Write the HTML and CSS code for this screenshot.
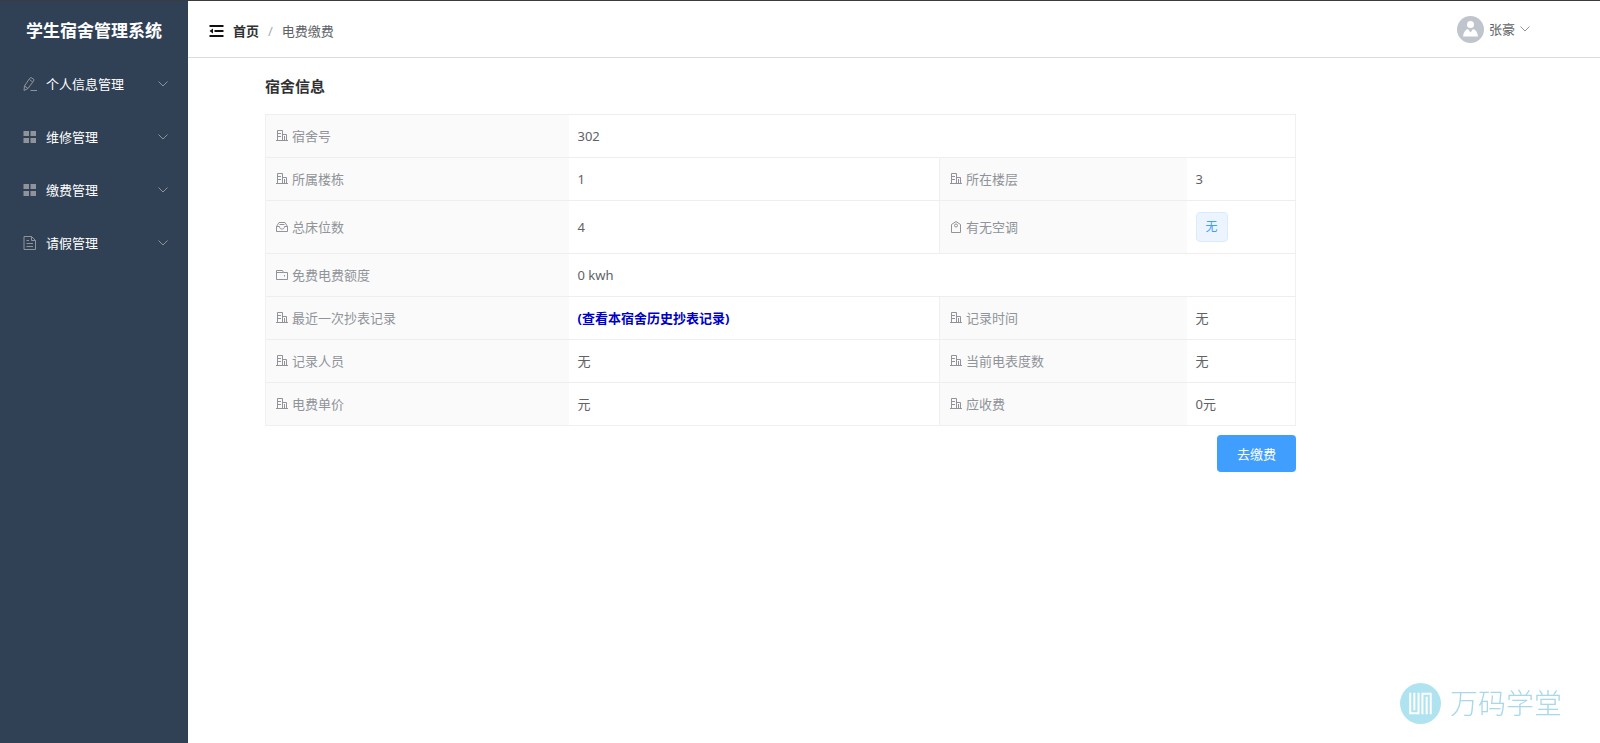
FILE: index.html
```html
<!DOCTYPE html>
<html lang="zh-CN">
<head>
<meta charset="utf-8">
<title>学生宿舍管理系统</title>
<link rel="stylesheet" href="styles.css">
</head>
<body>
<svg class="sprite" aria-hidden="true">
  <symbol id="office" viewBox="0 0 12 12"><path d="M1.5 10.500V.5H6.500V10.500M6.500 4.500H10.500V10.500M0 10.500H12M1.500 3.500H5M1.500 6.500H5M8.500 6V10.500" /></symbol>
  <symbol id="box" viewBox="0 0 12 12"><path d="M.5 5.500 3 1.500H9L11.500 5.500V10.500H.5ZM.5 5.500H3.500C3.500 9 8.500 9 8.500 5.500H11.500M3.500 3.500H8.500" /></symbol>
  <symbol id="wallet" viewBox="0 0 12 12"><path d="M.5 10.500V1.500H6.500L7.500 3.500H11.500V10.500ZM.5 3.500H7.500M8.500 6V7.500" /></symbol>
  <symbol id="tag" viewBox="0 0 12 12"><path d="M1.500 11.500V3.500L6 .5 10.500 3.500V11.500ZM7.500 4.500A1.500 1.500 0 1 1 4.500 4.500 1.500 1.500 0 1 1 7.500 4.500" /></symbol>
  <symbol id="chevron" viewBox="0 0 10 6"><path d="M.5 .5 5 5 9.500 .5" /></symbol>
  <symbol id="grid" viewBox="0 0 14 14"><path class="solid" d="M.5 1H6V6H.5ZM7.500 1H13V6H7.500ZM.5 8H6V13H.5ZM7.500 8H13V13H7.500Z" /></symbol>
  <symbol id="edit" viewBox="0 0 14 14"><path d="M6.500 1.500 8 .5 11 2.500 10.500 4 5 11.500 1 13.500 1.500 9ZM6.500 2.500 9.500 5M1.500 9 5 11.500M7.500 13.500H14" /></symbol>
  <symbol id="doc" viewBox="0 0 14 14"><path d="M1 .5H8.500L12.500 4.500V13.500H1ZM8.500 .5V4.500H12.500M3.500 4.500H6M3.500 7.500H10M3.500 10.500H10" /></symbol>
</svg>

<div class="app">
  <aside class="sidebar">
    <h1 class="brand">学生宿舍管理系统</h1>
    <nav class="menu">
      <button class="menu-item" type="button"><svg class="menu-icon"><use href="#edit"/></svg><span class="menu-text">个人信息管理</span><svg class="chevron"><use href="#chevron"/></svg></button>
      <button class="menu-item" type="button"><svg class="menu-icon"><use href="#grid"/></svg><span class="menu-text">维修管理</span><svg class="chevron"><use href="#chevron"/></svg></button>
      <button class="menu-item" type="button"><svg class="menu-icon"><use href="#grid"/></svg><span class="menu-text">缴费管理</span><svg class="chevron"><use href="#chevron"/></svg></button>
      <button class="menu-item" type="button"><svg class="menu-icon"><use href="#doc"/></svg><span class="menu-text">请假管理</span><svg class="chevron"><use href="#chevron"/></svg></button>
    </nav>
  </aside>

  <div class="page">
    <header class="topbar">
      <div class="crumbs">
        <button class="fold" type="button" aria-label="收起菜单"><svg class="fold-icon" viewBox="0 0 14 12"><path d="M0 0H14V2H0ZM5 5H14V7H5ZM0 10H14V12H0ZM3.500 3.500V8.500L0 6Z" /></svg></button>
        <a class="crumb-home" href="#">首页</a>
        <span class="crumb-sep">/</span>
        <span>电费缴费</span>
      </div>
      <button class="user" type="button">
        <svg class="avatar" viewBox="0 0 27 27"><circle class="avatar-bg" cx="13.500" cy="13.500" r="13.500"/><circle cx="13.500" cy="8.500" r="3.500"/><path d="M6 20.500C6.500 16 8.500 13.500 11 13L13.500 16.500 16 13C18.500 13.500 20.500 16 21 20.500Z"/></svg>
        <span>张豪</span>
        <svg class="chevron"><use href="#chevron"/></svg>
      </button>
    </header>

    <main class="content">
      <h2 class="title">宿舍信息</h2>
      <table class="info">
        <colgroup><col class="col-label"><col><col class="col-label-2"><col class="col-value-2"></colgroup>
        <tbody>
          <tr><th scope="row"><svg class="icon"><use href="#office"/></svg>宿舍号</th><td colspan="3">302</td></tr>
          <tr><th scope="row"><svg class="icon"><use href="#office"/></svg>所属楼栋</th><td>1</td><th scope="row"><svg class="icon"><use href="#office"/></svg>所在楼层</th><td>3</td></tr>
          <tr><th scope="row"><svg class="icon"><use href="#box"/></svg>总床位数</th><td>4</td><th scope="row"><svg class="icon"><use href="#tag"/></svg>有无空调</th><td><span class="badge">无</span></td></tr>
          <tr><th scope="row"><svg class="icon"><use href="#wallet"/></svg>免费电费额度</th><td colspan="3">0 kwh</td></tr>
          <tr><th scope="row"><svg class="icon"><use href="#office"/></svg>最近一次抄表记录</th><td><a class="history" href="#">(查看本宿舍历史抄表记录)</a></td><th scope="row"><svg class="icon"><use href="#office"/></svg>记录时间</th><td>无</td></tr>
          <tr><th scope="row"><svg class="icon"><use href="#office"/></svg>记录人员</th><td>无</td><th scope="row"><svg class="icon"><use href="#office"/></svg>当前电表度数</th><td>无</td></tr>
          <tr><th scope="row"><svg class="icon"><use href="#office"/></svg>电费单价</th><td>元</td><th scope="row"><svg class="icon"><use href="#office"/></svg>应收费</th><td>0元</td></tr>
        </tbody>
      </table>
      <div class="actions"><button class="pay" type="button">去缴费</button></div>
    </main>
  </div>
</div>

<div class="watermark">
  <svg class="mark" viewBox="0 0 42 42"><circle cx="21" cy="21" r="21"/><path d="M10.500 10V31H19V10M14.700 10V28M23 32V11H31.500V32M27.300 14V32" /></svg>
  <span>万码学堂</span>
</div>
</body>
</html>
```

FILE: styles.css
```css
* { box-sizing: border-box; }

body {
  margin: 0;
  background: #fff;
  color: #606266;
  font: 13px/20px "Noto Sans", "Noto Sans CJK SC", sans-serif;
}

button {
  border: 0;
  padding: 0;
  background: none;
  color: inherit;
  font: inherit;
  cursor: pointer;
}

a { text-decoration: none; }

svg {
  flex: none;
  fill: none;
  stroke: currentColor;
}

.solid { fill: currentColor; stroke: none; }

.sprite { display: none; }

.app {
  display: flex;
  min-height: 100vh;
  border-top: 1px solid #3b3b3f;
}

.sidebar {
  width: 188px;
  flex: none;
  background: #304156;
  color: #fff;
}

.brand {
  margin: 0;
  height: 56px;
  font-size: 17px;
  line-height: 60px;
  text-align: center;
}

.menu { display: flex; flex-direction: column; }

.menu-item {
  display: flex;
  align-items: center;
  height: 53px;
  padding: 0 20px 0 23px;
  gap: 9px;
  text-align: left;
}

.menu-text { flex: 1; }

.menu-icon { width: 14px; height: 14px; color: #909399; }

.chevron { width: 10px; height: 6px; color: #909399; }

.page { flex: 1; min-width: 0; }

.topbar {
  display: flex;
  align-items: center;
  justify-content: space-between;
  height: 57px;
  padding: 0 70px 0 21px;
  border-bottom: 1px solid #dcdcdc;
}

.crumbs { display: flex; align-items: center; gap: 9px; padding-top: 4px; }

.fold { display: flex; }

.fold-icon { width: 15px; height: 12px; fill: #111; stroke: none; }

.crumb-home { color: #303133; font-weight: 700; }

.crumb-sep { color: #a8abb2; }

.user { display: flex; align-items: center; gap: 5px; }

.avatar { width: 27px; height: 27px; fill: #fff; stroke: none; }

.avatar-bg { fill: #c0c4cc; }

.content { padding: 17px 304px 20px 77px; }

.title {
  margin: 0 0 17px;
  color: #303133;
  font-size: 15px;
  line-height: 22px;
}

.info {
  width: 100%;
  table-layout: fixed;
  border-collapse: collapse;
  border: 1px solid #f0f0f0;
}

.col-label { width: 303px; }
.col-label-2 { width: 247px; }
.col-value-2 { width: 109px; }

.info th,
.info td {
  height: 43px;
  padding: 0 10px;
  border-top: 1px solid #eee;
  text-align: left;
  font-weight: 400;
}

.info td { padding-left: 9px; }

.info th {
  border-left: 1px solid #f0f0f0;
  background: #fafafa;
  color: #909399;
}

.icon {
  width: 12px;
  height: 12px;
  margin-right: 4px;
  vertical-align: -1px;
}

.badge {
  display: inline-block;
  margin: 11px 0;
  padding: 0 9px;
  border: 1px solid #d9ecff;
  border-radius: 4px;
  background: #ecf5ff;
  color: #409eff;
  font-size: 12px;
  line-height: 28px;
  vertical-align: top;
}

.history { color: #0000c8; font-weight: 700; }

.actions { display: flex; justify-content: flex-end; padding-top: 9px; }

.pay {
  height: 37px;
  padding: 0 20px;
  border-radius: 4px;
  background: #409eff;
  color: #fff;
}

.watermark {
  position: fixed;
  right: 38px;
  bottom: 19px;
  display: flex;
  align-items: center;
  gap: 9px;
  color: #a9d9e8;
  font-size: 28px;
  font-weight: 300;
  line-height: 42px;
}

.mark {
  width: 41px;
  height: 41px;
  stroke: #fff;
  stroke-width: 2;
}

.mark circle { fill: #b0e3f0; stroke: none; }
```
